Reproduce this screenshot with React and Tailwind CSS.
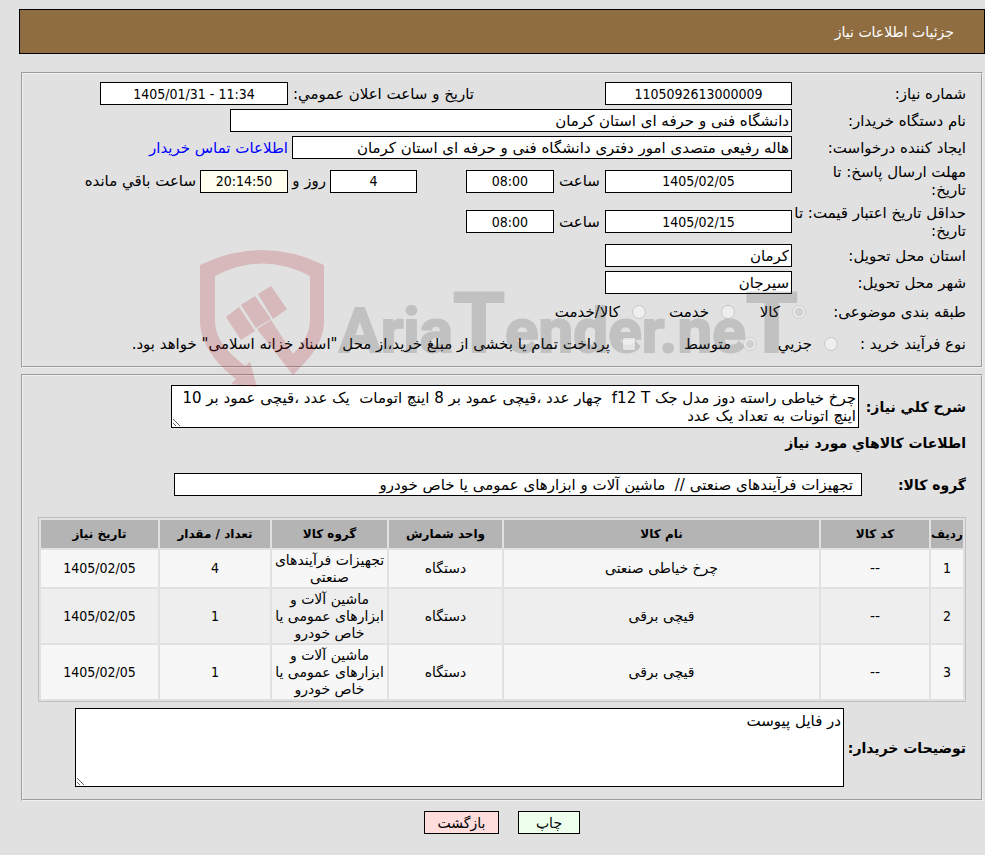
import React from 'react';

const items = [
  { code: '--', name: 'چرخ خیاطی صنعتی', unit: 'دستگاه', group: 'تجهیزات فرآیندهای صنعتی', count: 4, date: '1405/02/05' },
  { code: '--', name: 'قیچی برقی', unit: 'دستگاه', group: 'ماشین آلات و ابزارهای عمومی یا خاص خودرو', count: 1, date: '1405/02/05' },
  { code: '--', name: 'قیچی برقی', unit: 'دستگاه', group: 'ماشین آلات و ابزارهای عمومی یا خاص خودرو', count: 1, date: '1405/02/05' },
];

const Field = ({ className = '', ...props }) => (
  <input
    type="text"
    readOnly
    className={`h-[23px] min-w-0 border border-black px-0.5 ${className}`}
    {...props}
  />
);

// digits are set in the condensed face, Persian text in the regular one
const NumberField = ({ className = '', ...props }) => (
  <Field className={`text-center font-['DejaVu_Sans_Condensed',sans-serif] text-[14px] ${className}`} {...props} />
);

const Row = ({ label, htmlFor, className = 'min-h-[27px]', children }) => (
  <div className={`flex items-center ${className}`}>
    <label htmlFor={htmlFor} className="w-[174px] shrink-0 leading-[18px]">
      {label}
    </label>
    {children}
  </div>
);

const Choice = ({ type = 'radio', name, label, checked = false, className = '' }) => (
  <label className={`flex shrink-0 items-center gap-3 whitespace-nowrap ${className}`}>
    <input
      type={type}
      name={name}
      defaultChecked={checked}
      disabled
      className={`relative z-10 size-3.5 ${checked ? 'opacity-70' : ''}`}
    />
    <span>{label}</span>
  </label>
);

const Watermark = () => (
  <svg
    className="pointer-events-none absolute left-[179px] top-[178px] opacity-20"
    width="620"
    height="142"
    viewBox="0 0 620 142"
    aria-hidden="true"
  >
    <g fill="#af1923">
      <path d="M0 15 Q62 -15 124 15 V70 C124 92 112 106 93 125 L57 79 L71 70 L93 104 C104 93 110 82 110 70 V26 Q62 1 15 26 V70 C15 90 28 102 45 116 L50 112 L57 137 L31 134 L36 129 C14 112 0 92 0 70 Z" />
      <path d="M26 67 L39 57 L55 81 L41 90 Z M41 55 L55 46 L71 69 L56 78 Z M58 44 L71 36 L87 59 L73 69 Z" />
    </g>
    <text
      x="139"
      y="102"
      fill="#414141"
      stroke="#414141"
      strokeWidth="2"
      fontSize="62"
      fontWeight="700"
      fontFamily="Roboto, sans-serif"
      direction="ltr"
    >
      Aria<tspan fontSize="84">T</tspan>ender.ne<tspan fontSize="84">T</tspan>
    </text>
  </svg>
);

const App = () => (
  <div
    dir="rtl"
    className="min-h-screen bg-[#e1e1e1] pt-[9px] font-['DejaVu_Sans',sans-serif] text-[15px] leading-[18px] text-black"
  >
    <header className="ml-[19px] flex h-[45px] items-center border border-black bg-[#8f6d40] px-[30px] text-[14px] text-white">
      <h1>جزئیات اطلاعات نیاز</h1>
    </header>

    <main className="relative ml-[21px] mr-[2px] mt-[18px]">
      <fieldset className="border-2 border-[#f0f0f0] px-[15px] py-1.5 [border-style:groove]">
        <Row label="شماره نیاز:" htmlFor="need-no">
          <NumberField id="need-no" className="w-[187px] bg-white" defaultValue="1105092613000009" />
          <label htmlFor="announced" className="mr-[131px] w-[186px] shrink-0 whitespace-nowrap">
            تاریخ و ساعت اعلان عمومي:
          </label>
          <NumberField id="announced" dir="ltr" className="w-[188px] bg-white" defaultValue="1405/01/31 - 11:34" />
        </Row>
        <Row label="نام دستگاه خریدار:" htmlFor="buyer">
          <Field id="buyer" className="w-[562px] bg-white" defaultValue="دانشگاه فنی و حرفه ای استان کرمان" />
        </Row>
        <Row label="ایجاد کننده درخواست:" htmlFor="creator">
          <Field id="creator" className="w-[500px] bg-white" defaultValue="هاله رفیعی متصدی امور دفتری دانشگاه فنی و حرفه ای استان کرمان" />
          <a href="#contact" className="mr-1 shrink-0 text-[#0000ff]">
            اطلاعات تماس خریدار
          </a>
        </Row>
        <Row
          className="min-h-10"
          htmlFor="reply-date"
          label={<>مهلت ارسال پاسخ: تا<br />تاریخ:</>}
        >
          <NumberField id="reply-date" className="w-[187px] bg-white" defaultValue="1405/02/05" />
          <label htmlFor="reply-time" className="w-[51px] shrink-0 text-center">ساعت</label>
          <NumberField id="reply-time" className="w-[88px] bg-white" defaultValue="08:00" />
          <NumberField aria-label="روز" className="mr-[49px] w-[87px] bg-white" defaultValue="4" />
          <span className="w-[42px] shrink-0 pr-1">روز و</span>
          <NumberField id="remaining" className="w-[88px] bg-[#fffff0]" defaultValue="20:14:50" />
          <label htmlFor="remaining" className="mr-1 shrink-0">ساعت باقي مانده</label>
        </Row>
        <Row
          className="min-h-[41px]"
          htmlFor="valid-date"
          label={<>حداقل تاریخ اعتبار قیمت: تا<br />تاریخ:</>}
        >
          <NumberField id="valid-date" className="w-[187px] bg-white" defaultValue="1405/02/15" />
          <label htmlFor="valid-time" className="w-[51px] shrink-0 text-center">ساعت</label>
          <NumberField id="valid-time" className="w-[88px] bg-white" defaultValue="08:00" />
        </Row>
        <Row label="استان محل تحویل:" htmlFor="province">
          <Field id="province" className="w-[187px] bg-white" defaultValue="کرمان" />
        </Row>
        <Row label="شهر محل تحویل:" htmlFor="city">
          <Field id="city" className="w-[187px] bg-white" defaultValue="سیرجان" />
        </Row>
        <div className="flex min-h-8 items-center">
          <span className="w-40 shrink-0">طبقه بندی موضوعی:</span>
          <Choice name="category" label="کالا" checked className="w-[71px]" />
          <Choice name="category" label="خدمت" className="w-[89px]" />
          <Choice name="category" label="کالا/خدمت" />
        </div>
        <div className="flex min-h-8 items-center">
          <span className="w-32 shrink-0">نوع فرآیند خرید :</span>
          <Choice name="process" label="جزیي" className="w-[81px]" />
          <Choice name="process" label="متوسط" checked className="w-[121px]" />
          <Choice
            type="checkbox"
            name="treasury"
            label={'پرداخت تمام یا بخشی از مبلغ خرید،از محل "اسناد خزانه اسلامی" خواهد بود.'}
          />
        </div>
      </fieldset>

      <fieldset className="mt-1.5 border-2 border-[#f0f0f0] px-[15px] pb-3 pt-[9px] [border-style:groove]">
        <div className="flex items-center">
          <label htmlFor="summary" className="w-[107px] shrink-0 text-[14px] font-bold">شرح کلي نیاز:</label>
          <textarea
            id="summary"
            readOnly
            rows={2}
            className="block h-[43px] w-[688px] min-w-0 border border-black bg-white px-0.5 py-[3px]"
            defaultValue="چرخ خیاطی راسته دوز مدل جک f12 T  چهار عدد ،قیچی عمود بر 8 اینچ اتومات  یک عدد ،قیچی عمود بر 10 اینچ اتونات به تعداد یک عدد"
          />
        </div>
        <h2 className="mt-1.5 text-[14px] font-bold">اطلاعات کالاهاي مورد نیاز</h2>
        <div className="mt-[21px] flex items-center">
          <label htmlFor="goods-group" className="w-[104px] shrink-0 text-[14px] font-bold">گروه کالا:</label>
          <Field
            id="goods-group"
            className="w-[688px] bg-white pr-2"
            defaultValue="تجهیزات فرآیندهای صنعتی //  ماشین آلات و ابزارهای عمومی یا خاص خودرو"
          />
        </div>

        <div className="mt-[21px]">
          <table className="w-full table-fixed border-separate border-spacing-0.5 border border-[#c0c0c0] text-center text-[14px] leading-[17px]">
            <thead>
              <tr className="h-7 bg-[#b4b4b4] text-[12px]">
                <th className="w-8 whitespace-nowrap">ردیف</th>
                <th className="w-[108px]">کد کالا</th>
                <th>نام کالا</th>
                <th className="w-[113px]">واحد شمارش</th>
                <th className="w-[115px]">گروه کالا</th>
                <th className="w-[110px]">تعداد / مقدار</th>
                <th className="w-[117px]">تاریخ نیاز</th>
              </tr>
            </thead>
            <tbody>
              {items.map((item, i) => (
                <tr key={i} className="bg-[#f7f7f7] even:bg-[#eeeeee]">
                  <td className="font-['DejaVu_Sans_Condensed',sans-serif]">{i + 1}</td>
                  <td>{item.code}</td>
                  <td>{item.name}</td>
                  <td>{item.unit}</td>
                  <td className="pb-px pt-0.5">{item.group}</td>
                  <td className="font-['DejaVu_Sans_Condensed',sans-serif]">{item.count}</td>
                  <td className="font-['DejaVu_Sans_Condensed',sans-serif]">{item.date}</td>
                </tr>
              ))}
            </tbody>
          </table>
        </div>

        <div className="mt-1.5 flex items-center">
          <label htmlFor="notes" className="w-[122px] shrink-0 text-[14px] font-bold">توضیحات خریدار:</label>
          <textarea
            id="notes"
            readOnly
            className="block h-[79px] w-[769px] min-w-0 border border-black bg-white px-0.5 py-[3px]"
            defaultValue="در فایل پیوست"
          />
        </div>
      </fieldset>

      <Watermark />
    </main>

    <div className="mt-2.5 flex justify-center gap-[19px] pl-[19px] text-[14px]">
      <button type="button" className="h-[23px] w-[62px] border border-black bg-[#eeffee]">چاپ</button>
      <button type="button" className="h-[23px] w-[75px] border border-black bg-[#ffdddd]">بازگشت</button>
    </div>
  </div>
);

export default App;
